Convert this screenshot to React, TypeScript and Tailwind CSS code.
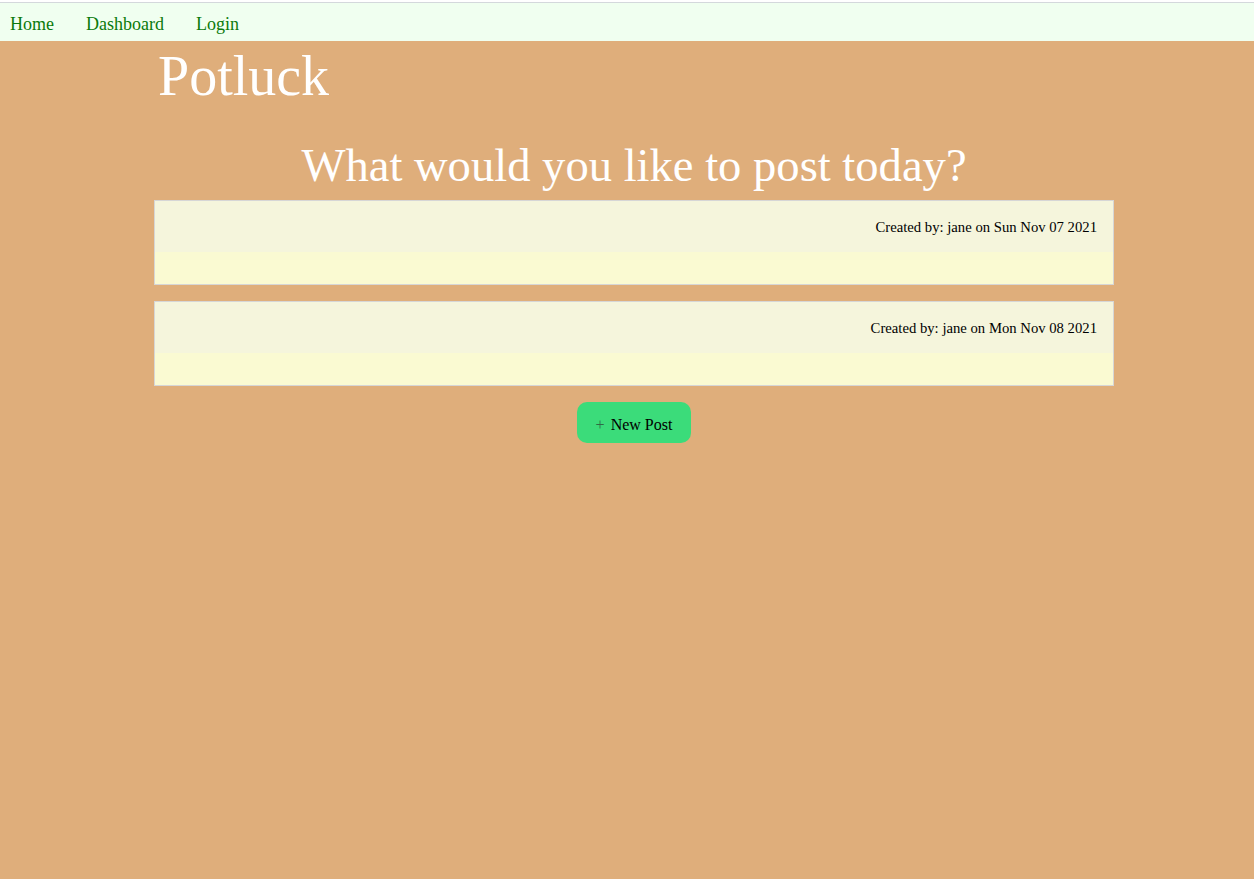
import React from 'react';

const serif = { fontFamily: '"Liberation Serif", "Times New Roman", serif' };

const PostCard = ({ author, date }: { author: string; date: string }) => {
  return (
    <div className="border border-[#d6d6d6] bg-[#fafad2]">
      <div className="bg-[#f5f5dc] pt-[18px] pb-[16px] pr-[16px] text-right text-[14.7px] leading-[17px] text-black">
        Created by: {author} on {date}
      </div>
      <div className="h-[32px]" />
    </div>
  );
};

const App = () => {
  const posts = [
    { author: 'jane', date: 'Sun Nov 07 2021' },
    { author: 'jane', date: 'Mon Nov 08 2021' },
  ];

  return (
    <div className="min-h-screen flex flex-col bg-white pt-[2px]" style={serif}>
      <nav className="border-t border-[#d4d8dc] bg-[#f0fff0] flex gap-[32px] pl-[10px] pt-[11px] pb-[7px] text-[18px] leading-[20px]">
        <a className="text-[#0b7a0b]">Home</a>
        <a className="text-[#0b7a0b]">Dashboard</a>
        <a className="text-[#0b7a0b]">Login</a>
      </nav>

      <main className="flex-1 bg-[#dfae7b]">
        <div className="ml-[154px] w-[960px]">
          <h1 className="mt-[3px] pl-[4px] text-[56px] leading-[64px] text-white">Potluck</h1>
          <h2 className="mt-[31px] text-center text-[46.6px] leading-[53px] text-white">
            What would you like to post today?
          </h2>
          <div className="mt-[8px] flex flex-col gap-[16px]">
            {posts.map((post, index) => (
              <PostCard key={index} author={post.author} date={post.date} />
            ))}
          </div>
          <div className="flex justify-center mt-[16px]">
            <button className="h-[41px] w-[114px] rounded-[10px] bg-[#3bdc7a] flex items-center justify-center gap-[6px] pt-[4px] text-[16px] text-black">
              <span className="text-[#2f6b45]">+</span>
              <span>New Post</span>
            </button>
          </div>
        </div>
      </main>
    </div>
  );
};

export default App;
